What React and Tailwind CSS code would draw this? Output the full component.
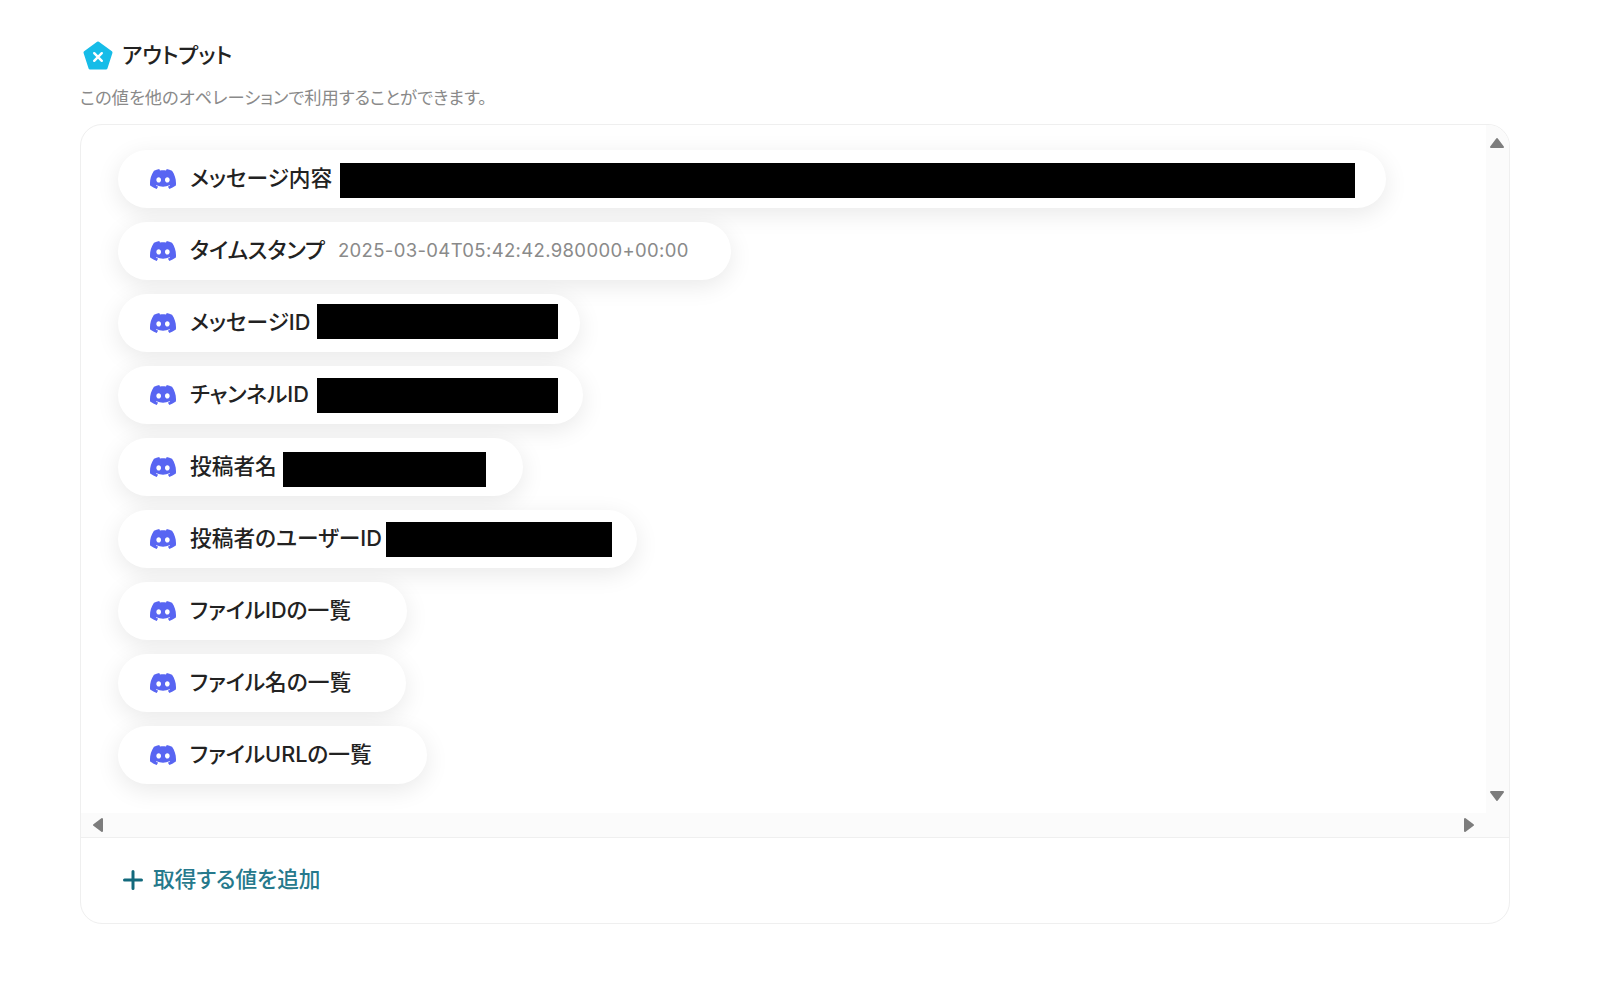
import React from 'react';
import { SiDiscord } from 'react-icons/si';

const rows = [
  { label: 'メッセージ内容', width: 'w-[1268px]', maskGap: 'ml-[8px] mt-[3px]', mask: 'w-[1015px]' },
  { label: 'タイムスタンプ', width: 'w-[613px]', value: '2025-03-04T05:42:42.980000+00:00' },
  { label: 'メッセージID', width: 'w-[462px]', maskGap: 'ml-[7px] mb-[3px]', mask: 'w-[241px]' },
  { label: 'チャンネルID', width: 'w-[465px]', maskGap: 'ml-[8px] mt-[1px]', mask: 'w-[241px]' },
  { label: '投稿者名', width: 'w-[405px]', maskGap: 'ml-[6px] mt-[5px]', mask: 'w-[203px]' },
  { label: '投稿者のユーザーID', width: 'w-[519px]', maskGap: 'ml-[4px]', mask: 'w-[226px]' },
  { label: 'ファイルIDの一覧', width: 'w-[289px]' },
  { label: 'ファイル名の一覧', width: 'w-[288px]' },
  { label: 'ファイルURLの一覧', width: 'w-[309px]' },
];

const Arrow = ({ points, className }) => (
  <svg className={className} viewBox="0 0 16 16" fill="#7d7d7d" stroke="#7d7d7d" strokeWidth={2} strokeLinejoin="round">
    <polygon points={points} />
  </svg>
);

const Row = ({ row }) => (
  <div className={`${row.width} h-[58px] shrink-0 flex items-center pl-8 rounded-full bg-white shadow-[0_6px_24px_rgba(0,0,0,0.09)]`}>
    <SiDiscord className="w-[26px] h-[26px] shrink-0 text-[#5865f2]" />
    <span className="ml-[14px] pb-[2px] text-[21.7px] font-medium text-[#222222] whitespace-nowrap">{row.label}</span>
    {row.value && (
      <span className="ml-[13px] text-[18.5px] tracking-[0.35px] text-[#8a8a8a] whitespace-nowrap">{row.value}</span>
    )}
    {row.mask && <div className={`${row.maskGap} ${row.mask} h-[35px] shrink-0 bg-black`} />}
  </div>
);

export default function App() {
  return (
    <div
      className="w-[1600px] h-[987px] bg-white pt-[41px] pl-[80px] [font-feature-settings:'palt']"
      style={{ fontFamily: 'Inter, "Noto Sans CJK JP", sans-serif' }}
    >
      <div className="flex items-center h-[30px] ml-[3px]">
        <svg className="w-[30px] h-[30px]" viewBox="0 0 30 30">
          <polygon
            points="15,2 28,11.5 23,27 7,27 2,11.5"
            fill="#16bce8"
            stroke="#16bce8"
            strokeWidth={3}
            strokeLinejoin="round"
          />
          <path d="M11.2 12.2 18.8 19.8M18.8 12.2 11.2 19.8" stroke="#ffffff" strokeWidth={2.4} strokeLinecap="round" />
        </svg>
        <h1 className="ml-[9px] pb-[2px] text-[21.7px] font-medium text-[#222222]">アウトプット</h1>
      </div>
      <p className="mt-[15px] h-[24px] leading-[24px] text-[17.3px] text-[#8a8a8a]">この値を他のオペレーションで利用することができます。</p>

      <div className="mt-[14px] w-[1430px] h-[800px] flex flex-col rounded-[22px] border border-[#efefef] overflow-hidden">
        <div className="flex h-[688px]">
          <div className="flex-1 flex flex-col gap-[14px] pt-[25px] pl-[37px]">
            {rows.map((row) => (
              <Row key={row.label} row={row} />
            ))}
          </div>
          <div className="w-[23px] flex flex-col items-center justify-between bg-[#fbfbfb] pt-[10px]">
            <Arrow points="8,4 14,12 2,12" className="w-4 h-4 -ml-[1px]" />
            <Arrow points="2,4 14,4 8,12" className="w-4 h-4 -ml-[1px] mb-[9px]" />
          </div>
        </div>
        <div className="h-[24px] flex items-center justify-between bg-[#fbfbfb] pl-[9px] pr-[32px] border-b border-[#efefef] box-content">
          <Arrow points="12,2 12,14 4,8" className="w-4 h-4" />
          <Arrow points="4,2 4,14 12,8" className="w-4 h-4" />
        </div>
        <div className="flex-1 flex items-center pl-[42px] pb-[2px]">
          <svg className="w-[20px] h-[20px]" viewBox="0 0 20 20" stroke="#12697c" strokeWidth={3} strokeLinecap="round">
            <path d="M10 1.5v17M1.5 10h17" />
          </svg>
          <span className="ml-[10px] pb-[1px] text-[21.7px] font-medium text-[#26798c]">取得する値を追加</span>
        </div>
      </div>
    </div>
  );
}
